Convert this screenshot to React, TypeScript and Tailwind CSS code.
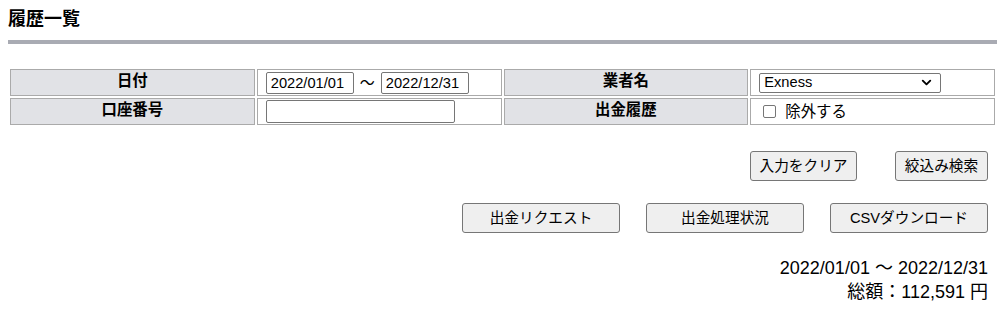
import { ChevronDown } from "lucide-react";

const font = "font-['Liberation_Sans','Noto_Sans_CJK_JP',sans-serif]";

function Btn({ label, className = "" }: { label: string; className?: string }) {
  return (
    <button
      className={`h-[30px] bg-[#efefef] border border-[#767676] rounded-[3px] text-[14.67px] leading-none text-black ${className}`}
    >
      {label}
    </button>
  );
}

export default function App() {
  return (
    <div className={`${font} w-[1005px] h-[311px] bg-white px-2 text-black overflow-hidden`}>
      {/* 見出し */}
      <div className="pt-[7px] pb-[9px] border-b-4 border-[#a9abb3]">
        <h1 className="text-[18px] leading-[24px] font-bold">履歴一覧</h1>
      </div>

      {/* 検索条件 */}
      <table className="w-full table-fixed border-separate border-spacing-[2px] mt-[23px] text-[15.4px]">
        <tbody>
          <tr>
            <th className="h-[27px] w-1/4 bg-[#e1e2e6] border border-[#aaaaaa] font-bold leading-none pb-[3px]">
              日付
            </th>
            <td className="h-[27px] w-1/4 border border-[#aaaaaa] pl-2 align-middle">
              <div className="flex items-center">
                <input
                  defaultValue="2022/01/01"
                  className="w-[88px] h-[22px] border border-[#767676] rounded-[2px] px-[4px] text-[14.67px] leading-none"
                />
                <span className="mx-[6px] text-[15px] leading-none">～</span>
                <input
                  defaultValue="2022/12/31"
                  className="w-[88px] h-[22px] border border-[#767676] rounded-[2px] px-[4px] text-[14.67px] leading-none"
                />
              </div>
            </td>
            <th className="h-[27px] w-1/4 bg-[#e1e2e6] border border-[#aaaaaa] font-bold leading-none pb-[3px]">
              業者名
            </th>
            <td className="h-[27px] w-1/4 border border-[#aaaaaa] pl-2 align-middle">
              <div className="flex items-center justify-between w-[182px] h-[20px] border border-[#767676] rounded-[2px] pl-[4px] pr-[6px] text-[14.67px] leading-none">
                <span>Exness</span>
                <ChevronDown size={15} strokeWidth={3} />
              </div>
            </td>
          </tr>
          <tr>
            <th className="h-[27px] bg-[#e1e2e6] border border-[#aaaaaa] font-bold leading-none pb-[3px]">
              口座番号
            </th>
            <td className="h-[27px] border border-[#aaaaaa] pl-2 align-middle">
              <input className="block w-[189px] h-[23px] border border-[#767676] rounded-[2px] px-[4px]" />
            </td>
            <th className="h-[27px] bg-[#e1e2e6] border border-[#aaaaaa] font-bold leading-none pb-[3px]">
              出金履歴
            </th>
            <td className="h-[27px] border border-[#aaaaaa] pl-[12px] align-middle">
              <label className="flex items-center gap-[9px] leading-none">
                <span className="block w-[13px] h-[13px] border border-[#767676] rounded-[2px] bg-white" />
                <span>除外する</span>
              </label>
            </td>
          </tr>
        </tbody>
      </table>

      {/* ボタン */}
      <div className="pr-[9px]">
        <div className="flex justify-end gap-[38px] mt-[24px]">
          <Btn label="入力をクリア" className="w-[107px]" />
          <Btn label="絞込み検索" className="w-[93px]" />
        </div>
        <div className="flex justify-end gap-[26px] mt-[22px]">
          <Btn label="出金リクエスト" className="w-[158px]" />
          <Btn label="出金処理状況" className="w-[158px]" />
          <Btn label="CSVダウンロード" className="w-[158px]" />
        </div>

        {/* 集計 */}
        <div className="text-right text-[18px] leading-[24px] mt-[23px]">
          <div>2022/01/01 ～ 2022/12/31</div>
          <div>総額：112,591 円</div>
        </div>
      </div>
    </div>
  );
}
